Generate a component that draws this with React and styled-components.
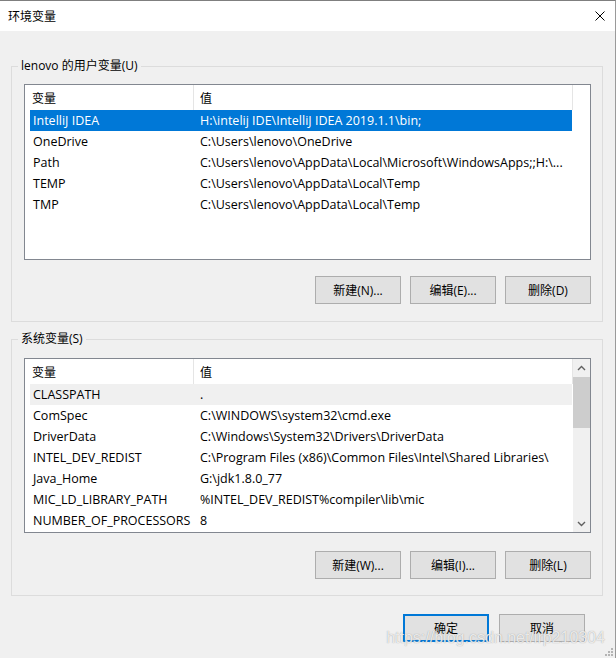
import React from 'react'
import styled, { createGlobalStyle } from 'styled-components'

const userVars = [
  { name: 'IntelliJ IDEA', value: 'H:\\intelij IDE\\IntelliJ IDEA 2019.1.1\\bin;', state: 'selected' },
  { name: 'OneDrive', value: 'C:\\Users\\lenovo\\OneDrive' },
  { name: 'Path', value: 'C:\\Users\\lenovo\\AppData\\Local\\Microsoft\\WindowsApps;;H:\\...' },
  { name: 'TEMP', value: 'C:\\Users\\lenovo\\AppData\\Local\\Temp' },
  { name: 'TMP', value: 'C:\\Users\\lenovo\\AppData\\Local\\Temp' },
]

const systemVars = [
  { name: 'CLASSPATH', value: '.', state: 'inactive' },
  { name: 'ComSpec', value: 'C:\\WINDOWS\\system32\\cmd.exe' },
  { name: 'DriverData', value: 'C:\\Windows\\System32\\Drivers\\DriverData' },
  { name: 'INTEL_DEV_REDIST', value: 'C:\\Program Files (x86)\\Common Files\\Intel\\Shared Libraries\\' },
  { name: 'Java_Home', value: 'G:\\jdk1.8.0_77' },
  { name: 'MIC_LD_LIBRARY_PATH', value: '%INTEL_DEV_REDIST%compiler\\lib\\mic' },
  { name: 'NUMBER_OF_PROCESSORS', value: '8' },
]

function VarList({ rows, height, top, scroll }) {
  return (
    <ListBox $h={height} $top={top}>
      <ListMain>
        <Header>
          <HeadCell $pad={7}>变量</HeadCell>
          <HeadCell $pad={6}>值</HeadCell>
          {!scroll && <HeadCell $last />}
        </Header>
        {rows.map(r => (
          <Row key={r.name} $state={r.state}>
            <Cell>{r.name}</Cell>
            <Cell>{r.value}</Cell>
          </Row>
        ))}
      </ListMain>
      {scroll && (
        <ScrollBar>
          <Arrow>
            <svg width="9" height="6" viewBox="0 0 9 6"><path d="M1 5 L4.5 1.5 L8 5" fill="none" stroke="#606060" strokeWidth="1.4" /></svg>
          </Arrow>
          <Track><Thumb /></Track>
          <Arrow>
            <svg width="9" height="6" viewBox="0 0 9 6"><path d="M1 1 L4.5 4.5 L8 1" fill="none" stroke="#606060" strokeWidth="1.4" /></svg>
          </Arrow>
        </ScrollBar>
      )}
    </ListBox>
  )
}

function App() {
  return (
    <Window>
      <GlobalStyle />
      <TitleBar>
        <span>环境变量</span>
        <svg width="10" height="10" viewBox="0 0 10 10">
          <path d="M0.5 0.5 L9.5 9.5 M9.5 0.5 L0.5 9.5" stroke="#000" strokeWidth="1" />
        </svg>
      </TitleBar>
      <Body>
        <Group $top={27} $bottom={17}>
          <Caption>lenovo 的用户变量(U)</Caption>
          <VarList rows={userVars} height={176} top={10} />
          <ButtonRow $top={16}>
            <Button>新建(N)...</Button>
            <Button>编辑(E)...</Button>
            <Button>删除(D)</Button>
          </ButtonRow>
        </Group>
        <Group $top={9} $bottom={16}>
          <Caption>系统变量(S)</Caption>
          <VarList rows={systemVars} height={175} top={11} scroll />
          <ButtonRow $top={18}>
            <Button>新建(W)...</Button>
            <Button>编辑(I)...</Button>
            <Button>删除(L)</Button>
          </ButtonRow>
        </Group>
        <Footer>
          <Button $primary>确定</Button>
          <Button>取消</Button>
        </Footer>
      </Body>
      <Watermark>https://blog.csdn.net/lrp210304</Watermark>
      <Grip width="10" height="10" viewBox="0 0 10 10">
        <rect x="8" y="2" width="2" height="2" fill="#b4b4b4" />
        <rect x="5" y="5" width="2" height="2" fill="#b4b4b4" />
        <rect x="8" y="5" width="2" height="2" fill="#b4b4b4" />
        <rect x="2" y="8" width="2" height="2" fill="#b4b4b4" />
        <rect x="5" y="8" width="2" height="2" fill="#b4b4b4" />
        <rect x="8" y="8" width="2" height="2" fill="#b4b4b4" />
      </Grip>
    </Window>
  )
}

const GlobalStyle = createGlobalStyle`
  html, body {
    margin: 0;
    padding: 0;
    background: #f0f0f0;
  }
  body {
    font-family: "Open Sans", "Noto Sans CJK SC", sans-serif;
    font-size: 12px;
    color: #000;
  }
`

const Window = styled.div`
  position: relative;
  width: 616px;
  height: 658px;
  box-sizing: border-box;
  border-top: 1px solid #7f7f7f;
  border-right: 1px solid #9a9a9a;
  background: #f0f0f0;
  display: flex;
  flex-direction: column;
  overflow: hidden;
`

const TitleBar = styled.div`
  height: 30px;
  flex: none;
  background: #fff;
  display: flex;
  align-items: center;
  justify-content: space-between;
  padding: 0 10px 0 8px;
  font-size: 12px;
`

const Body = styled.div`
  padding: 0 12px 0 11px;
`

const Group = styled.fieldset`
  margin: ${p => p.$top}px 0 0;
  padding: 0 11px ${p => p.$bottom}px 12px;
  border: 1px solid #dcdcdc;
  min-width: 0;
`

const Caption = styled.legend`
  margin-left: -6px;
  padding: 0 3px;
  line-height: 16px;
  font-size: 12px;
`

const ListBox = styled.div`
  margin-top: ${p => p.$top}px;
  height: ${p => p.$h}px;
  box-sizing: border-box;
  border: 1px solid #828790;
  background: #fff;
  display: flex;
  overflow: hidden;
`

const ListMain = styled.div`
  flex: 1;
  min-width: 0;
`

const Header = styled.div`
  display: grid;
  grid-template-columns: 169px 379px 1fr;
  height: 25px;
`

const HeadCell = styled.div`
  box-sizing: border-box;
  display: flex;
  align-items: center;
  padding-left: ${p => p.$pad || 0}px;
  border-right: ${p => (p.$last ? 'none' : '1px solid #e5e5e5')};
`

const Row = styled.div`
  display: grid;
  grid-template-columns: 167px 1fr;
  margin-left: 5px;
  width: 542px;
  height: 21px;
  align-items: center;
  font-size: 12.5px;
  background: ${p => (p.$state === 'selected' ? '#0078d7' : p.$state === 'inactive' ? '#f0f0f0' : 'transparent')};
  color: ${p => (p.$state === 'selected' ? '#fff' : '#000')};
`

const Cell = styled.div`
  padding-left: 3px;
  white-space: nowrap;
  overflow: hidden;
`

const ScrollBar = styled.div`
  width: 17px;
  flex: none;
  background: #f0f0f0;
  display: flex;
  flex-direction: column;
`

const Arrow = styled.div`
  height: 17px;
  display: flex;
  align-items: center;
  justify-content: center;
`

const Track = styled.div`
  flex: 1;
  padding-top: 1px;
`

const Thumb = styled.div`
  height: 51px;
  background: #cdcdcd;
`

const ButtonRow = styled.div`
  margin-top: ${p => p.$top}px;
  display: flex;
  justify-content: flex-end;
  gap: 9px;
`

const Button = styled.button`
  width: 86px;
  height: 28px;
  padding: 0;
  box-sizing: border-box;
  background: #e1e1e1;
  border: ${p => (p.$primary ? '2px solid #0078d7' : '1px solid #adadad')};
  font-family: inherit;
  font-size: 12px;
  color: #000;
`

const Footer = styled.div`
  margin-top: 18px;
  padding-right: 18px;
  display: flex;
  justify-content: flex-end;
  gap: 10px;
`

const Watermark = styled.div`
  position: absolute;
  right: 10px;
  bottom: 11px;
  font-family: "Liberation Sans", Arial, sans-serif;
  font-size: 16px;
  color: rgba(255, 255, 255, 0.8);
  text-shadow: 0 0 1px rgba(110, 110, 110, 0.7);
  pointer-events: none;
`

const Grip = styled.svg`
  position: absolute;
  right: 2px;
  bottom: 2px;
`

export default App
